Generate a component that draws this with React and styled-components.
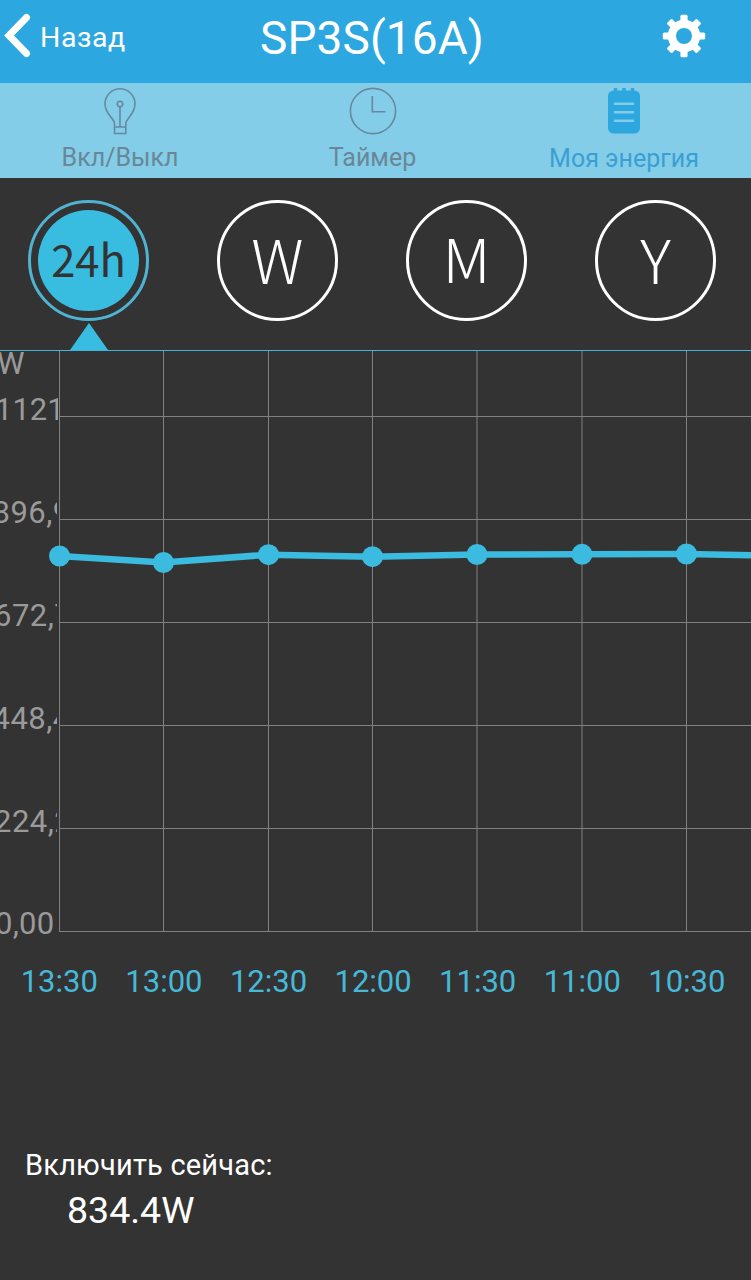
import React from 'react';
import styled, { createGlobalStyle } from 'styled-components';

const GlobalStyle = createGlobalStyle`
  * { box-sizing: border-box; }
  body { margin: 0; background: #333; font-family: Roboto, "Liberation Sans", sans-serif; }
`;

const Screen = styled.div`
  width: 751px;
  height: 1280px;
  overflow: hidden;
  background: #333;
  color: #fff;
  display: flex;
  flex-direction: column;
  white-space: nowrap;
`;

const Header = styled.header`
  height: 83px;
  background: #2da7df;
  display: grid;
  grid-template-columns: 240px 1fr 247px;
`;

const BackButton = styled.div`
  display: flex;
  align-items: flex-start;
  padding: 13px 0 0 4px;
  gap: 9px;
`;

const BackLabel = styled.span`
  font-size: 28.5px;
  line-height: 34px;
  padding-top: 8px;
  letter-spacing: 0.55px;
`;

const Title = styled.h1`
  margin: 0;
  padding-top: 10px;
  font-size: 46px;
  line-height: 56px;
  font-weight: 400;
  text-align: center;
  letter-spacing: 0.1px;
`;

const SettingsButton = styled.div`
  padding: 14px 0 0 158px;
`;

const Tabs = styled.nav`
  height: 95px;
  background: #83cde9;
  display: grid;
  grid-template-columns: 240px 265px 238px;
`;

const Tab = styled.div`
  display: flex;
  flex-direction: column;
  align-items: center;
  padding-top: 4px;
  color: #6689a0;
`;

const TabLabel = styled.span`
  font-size: 25px;
  line-height: 30px;
  margin-top: ${(p) => (p.$active ? 9 : 8)}px;
  color: ${(p) => (p.$active ? '#3b9fd2' : '#698796')};
`;

const Periods = styled.div`
  height: 172px;
  padding: 22px 35px 0 28px;
  display: flex;
  justify-content: space-between;
`;

const Period = styled.div`
  width: 121px;
  display: flex;
  flex-direction: column;
  align-items: center;
`;

const Ring = styled.div`
  width: 121px;
  height: 121px;
  flex: none;
  border-radius: 50%;
  border: 3px solid ${(p) => (p.$active ? '#4fb4d3' : '#fff')};
  padding: ${(p) => (p.$active ? 7 : 0)}px;
`;

const Disc = styled.div`
  width: 100%;
  height: 100%;
  border-radius: 50%;
  display: flex;
  align-items: center;
  justify-content: center;
  background: ${(p) => (p.$active ? '#38bce0' : 'transparent')};
  color: ${(p) => (p.$active ? '#333' : '#fff')};
  font-family: "Noto Sans CJK SC", "Noto Sans", sans-serif;
  font-size: ${(p) => (p.$active ? 43.5 : 61)}px;
  font-weight: ${(p) => (p.$active ? 400 : 300)};
  line-height: 1;
  padding-bottom: ${(p) => p.$lift}px;
`;

const Pointer = styled.div`
  width: 0;
  height: 0;
  margin-top: 2px;
  border-left: 19px solid transparent;
  border-right: 19px solid transparent;
  border-bottom: 27px solid #38bce0;
`;

const Chart = styled.section`
  border-top: 1px solid #42b5d6;
  height: 595px;
  display: flex;
`;

const Axis = styled.div`
  width: 58px;
  color: #9a9a9a;
  font-size: 31px;
  flex: none;
`;

const Unit = styled.div`
  height: 40px;
  line-height: 25px;
  margin-left: -3px;
`;

const AxisLabel = styled.div`
  width: ${(p) => p.$clip}px;
  height: 102.9px;
  line-height: 38px;
  overflow: hidden;
  text-indent: ${(p) => p.$x}px;
  letter-spacing: ${(p) => p.$spacing}px;
`;

const Plot = styled.svg`
  display: block;
  flex: none;
  overflow: visible;
`;

const Times = styled.div`
  display: flex;
  padding-left: 7px;
  padding-top: 18px;
  height: 94px;
`;

const Time = styled.div`
  width: 104.6px;
  flex: none;
  text-align: center;
  color: #46b9d9;
  font-size: 31px;
  line-height: 38px;
`;

const Current = styled.footer`
  margin-top: 109px;
  margin-left: 25px;
  width: 248px;
`;

const CurrentLabel = styled.div`
  font-size: 29px;
  line-height: 34px;
  letter-spacing: 0.2px;
`;

const CurrentValue = styled.div`
  font-size: 37.5px;
  line-height: 46px;
  margin-top: 5px;
  padding-left: 42px;
`;

const BackIcon = () => (
  <svg width="27" height="45" viewBox="0 0 27 45" fill="none" stroke="#fff" strokeWidth="7" strokeLinecap="round" strokeLinejoin="miter">
    <path d="M22.5 4.5 5 22.5 22.5 40.5" />
  </svg>
);

const GearIcon = () => (
  <svg width="44" height="44" viewBox="-22 -22 44 44">
    {[0, 45, 90, 135].map((a) => (
      <rect key={a} x="-3.6" y="-21.2" width="7.2" height="42.4" rx="1.5" fill="#fff" transform={`rotate(${a})`} />
    ))}
    <circle r="16.2" fill="#fff" />
    <circle r="8" fill="#2da7df" />
  </svg>
);

const BulbIcon = () => (
  <svg width="34" height="48" viewBox="0 0 34 48" fill="none" stroke="currentColor" strokeWidth="1.6">
    <path d="M11.5 40V36.5C11.5 31.5 2 27.5 2 16.8A15 15 0 0 1 32 16.8C32 27.5 22.8 31.5 22.8 36.5V46.5H11.5V40H22.8M17 19.8V40" />
    <circle cx="17" cy="17" r="2.7" />
  </svg>
);

const ClockIcon = () => (
  <svg width="48" height="48" viewBox="0 0 48 48" fill="none" stroke="currentColor" strokeWidth="1.6">
    <circle cx="24" cy="24" r="22.6" />
    <path d="M23.3 9V24.8H36.5" />
  </svg>
);

const NotesIcon = () => (
  <svg width="34" height="48" viewBox="0 0 34 48">
    <rect x="1" y="3.5" width="32" height="43" rx="5.5" fill="#2da7df" />
    <path d="M8.5 1V7M17 1V7M25.5 1V7" stroke="#2da7df" strokeWidth="3.4" />
    <path d="M8 16.7H26M8 25.3H26M8 33.8H26" stroke="#83cde9" strokeWidth="2.6" strokeLinecap="round" />
  </svg>
);

const periods = [
  { text: '24h', active: true, lift: 4 },
  { text: 'W', lift: 7 },
  { text: 'M', lift: 9 },
  { text: 'Y', lift: 7 },
];

const axis = [
  { label: '1121', x: -5, clip: 58, spacing: 0 },
  { label: '896,9', x: -7.5, clip: 57, spacing: 0.5 },
  { label: '672,7', x: -6, clip: 57, spacing: 0.5 },
  { label: '448,4', x: -7.5, clip: 57, spacing: 0.5 },
  { label: '224,2', x: -6, clip: 57, spacing: 0.5 },
  { label: '0,00', x: -5, clip: 58, spacing: 0.3 },
];

const times = ['13:30', '13:00', '12:30', '12:00', '11:30', '11:00', '10:30'];

const columns = [1.5, 105.5, 210.5, 314.5, 419, 524, 628.5];
const rows = [65.5, 168.5, 271.5, 374.5, 477.5, 580.5];
const readings = [205, 211.5, 203.7, 205.7, 203.5, 203.3, 203];

export default function App() {
  const line = [...columns.map((x, i) => `${x},${readings[i]}`), '693,204.2'].join(' ');
  return (
    <>
      <GlobalStyle />
      <Screen>
        <Header>
          <BackButton>
            <BackIcon />
            <BackLabel>Назад</BackLabel>
          </BackButton>
          <Title>SP3S(16A)</Title>
          <SettingsButton>
            <GearIcon />
          </SettingsButton>
        </Header>
        <Tabs>
          <Tab>
            <BulbIcon />
            <TabLabel>Вкл/Выкл</TabLabel>
          </Tab>
          <Tab>
            <ClockIcon />
            <TabLabel>Таймер</TabLabel>
          </Tab>
          <Tab>
            <NotesIcon />
            <TabLabel $active>Моя энергия</TabLabel>
          </Tab>
        </Tabs>
        <Periods>
          {periods.map((p) => (
            <Period key={p.text}>
              <Ring $active={p.active}>
                <Disc $active={p.active} $lift={p.lift}>{p.text}</Disc>
              </Ring>
              {p.active && <Pointer />}
            </Period>
          ))}
        </Periods>
        <Chart>
          <Axis>
            <Unit>W</Unit>
            {axis.map(({ label, x, clip, spacing }) => (
              <AxisLabel key={label} $x={x} $clip={clip} $spacing={spacing}>{label}</AxisLabel>
            ))}
          </Axis>
          <Plot width="693" height="594" viewBox="0 0 693 594">
            <g stroke="#818181" strokeWidth="1">
              {columns.map((x) => (
                <line key={x} x1={x} x2={x} y1="0" y2="581" />
              ))}
              {rows.map((y) => (
                <line key={y} x1="1" x2="693" y1={y} y2={y} />
              ))}
            </g>
            <polyline points={line} fill="none" stroke="#3bbbdf" strokeWidth="6.5" />
            {columns.map((x, i) => (
              <circle key={x} cx={x} cy={readings[i]} r="10.5" fill="#3bbbdf" />
            ))}
          </Plot>
        </Chart>
        <Times>
          {times.map((t) => (
            <Time key={t}>{t}</Time>
          ))}
        </Times>
        <Current>
          <CurrentLabel>Включить сейчас:</CurrentLabel>
          <CurrentValue>834.4W</CurrentValue>
        </Current>
      </Screen>
    </>
  );
}
